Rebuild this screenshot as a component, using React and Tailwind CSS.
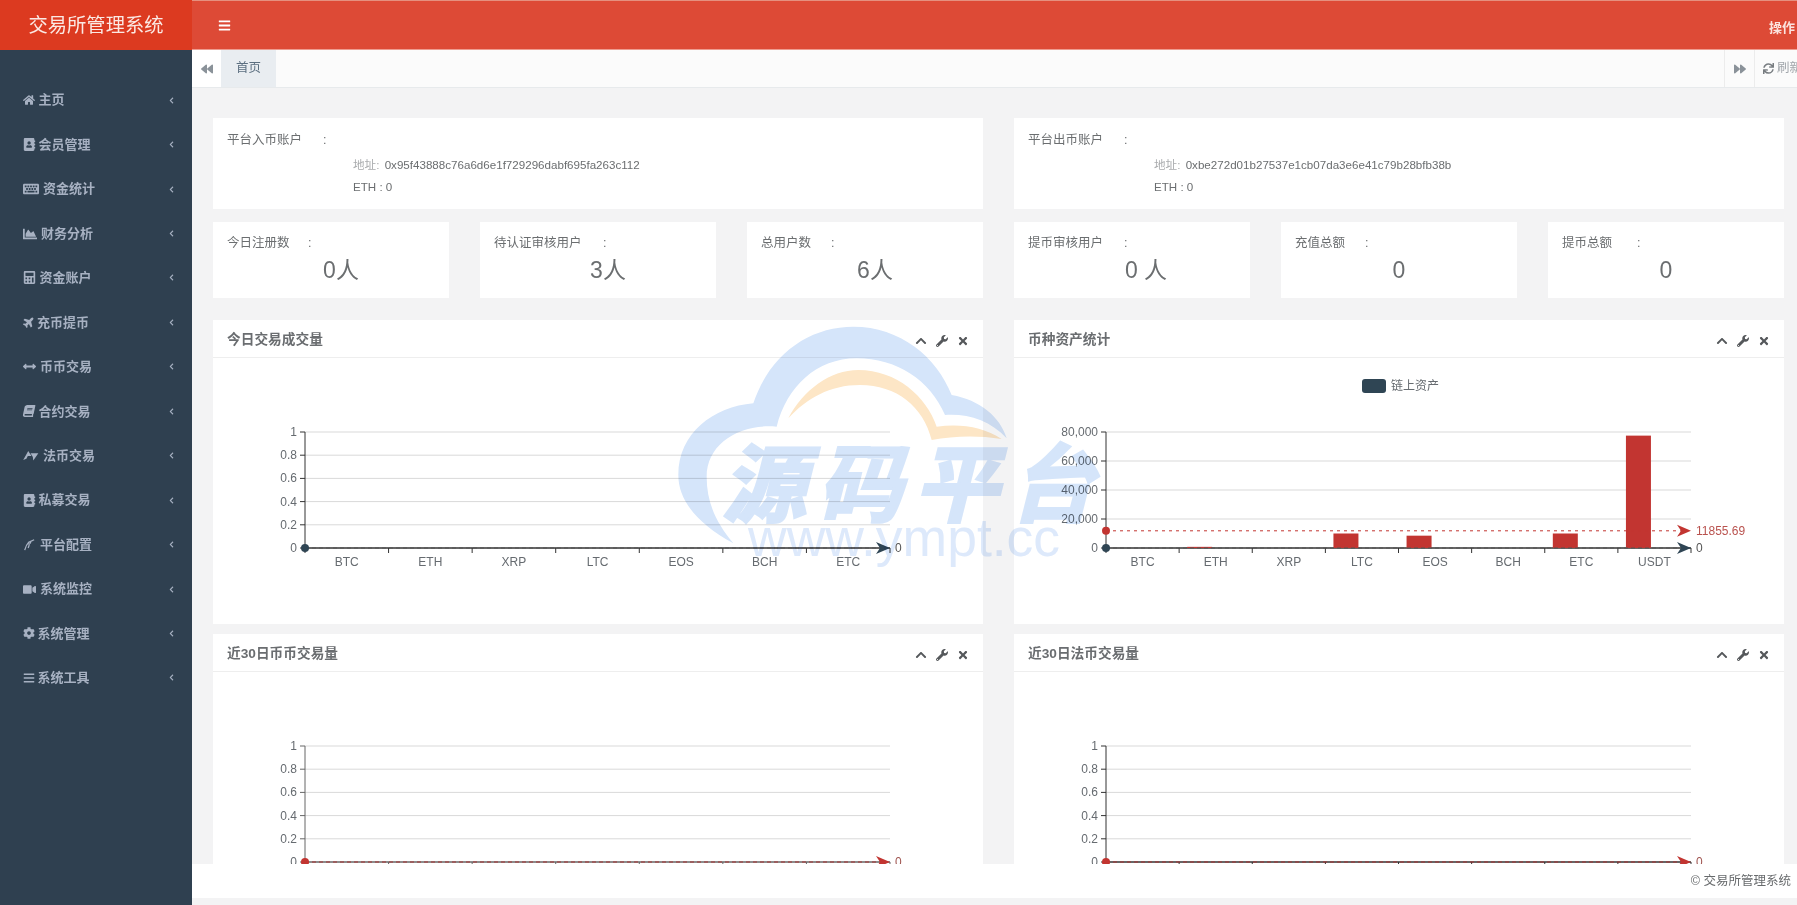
import React from "react";
import {
  FaHome, FaAddressBook, FaKeyboard, FaChartArea, FaCalculator, FaPlane, FaArrowsAltH, FaBook,
  FaVideo, FaCog, FaBars, FaChevronLeft, FaChevronUp, FaWrench, FaTimes,
  FaBackward, FaForward, FaSync,
} from "react-icons/fa";

// the two brand glyphs that the icon package doesn't have in this shape
const ModxIcon = ({ className }) => (
  <svg viewBox="0 0 17 12" fill="currentColor" className={className}>
    <path d="M0 11L5.5 1L9 6.5H5L3.5 9.5Z" />
    <path d="M8 3.5H16.5L11 11.5L10.5 7.5Z" />
  </svg>
);

const PiperIcon = ({ className }) => (
  <svg viewBox="0 0 14 14" fill="none" stroke="currentColor" strokeWidth="1.5" className={className}>
    <path d="M2 13.5C3 10 4 7 6.5 4.5L13 1.5" />
    <path d="M6.5 4.5C7.5 6 7.5 8 6 11" />
    <path d="M9 3.5L8.5 6" />
  </svg>
);

const navItems = [
  { label: "主页", icon: FaHome, w: "w-[15.5px]", size: "text-[12px]" },
  { label: "会员管理", icon: FaAddressBook, w: "w-[15.5px]", size: "text-[13px]" },
  { label: "资金统计", icon: FaKeyboard, w: "w-[20px]", size: "text-[16px]" },
  { label: "财务分析", icon: FaChartArea, w: "w-[18px]", size: "text-[14px]" },
  { label: "资金账户", icon: FaCalculator, w: "w-[16.5px]", size: "text-[13px]" },
  { label: "充币提币", icon: FaPlane, w: "w-[14px]", size: "text-[12px] -rotate-45" },
  { label: "币币交易", icon: FaArrowsAltH, w: "w-[17px]", size: "text-[13px]" },
  { label: "合约交易", icon: FaBook, w: "w-[15.5px]", size: "text-[12px] -skew-x-12" },
  { label: "法币交易", icon: ModxIcon, w: "w-[20px]", size: "w-[16px] h-[11px]" },
  { label: "私募交易", icon: FaAddressBook, w: "w-[15.5px]", size: "text-[13px]" },
  { label: "平台配置", icon: PiperIcon, w: "w-[17px]", size: "w-[12px] h-[13px]" },
  { label: "系统监控", icon: FaVideo, w: "w-[17px]", size: "text-[13px]" },
  { label: "系统管理", icon: FaCog, w: "w-[14.5px]", size: "text-[12px]" },
  { label: "系统工具", icon: FaBars, w: "w-[14.5px]", size: "text-[12px]" },
];

const coins = ["BTC", "ETH", "XRP", "LTC", "EOS", "BCH", "ETC"];
const unitTicks = ["1", "0.8", "0.6", "0.4", "0.2", "0"];

const Sidebar = () => (
  <aside className="w-[192px] shrink-0 bg-[#2f4050] flex flex-col">
    <div className="h-[50px] bg-[#dc3a20] text-[#fbe9e4] text-[19.3px] flex items-center justify-center pt-[3px]">
      交易所管理系统
    </div>
    <nav className="pt-[28px]">
      {navItems.map((item) => (
        <div key={item.label} className="h-[44.45px] pl-[23px] pr-[17px] flex items-center text-[13px] font-semibold text-[#a7b1c2]">
          <span className={`${item.w} shrink-0`}>
            <item.icon className={item.size} />
          </span>
          <span className="flex-1">{item.label}</span>
          <FaChevronLeft className="text-[7px]" />
        </div>
      ))}
    </nav>
  </aside>
);

const TopBar = () => (
  <header className="h-[50px] shrink-0 bg-[#dd4a36] border-t border-t-[#e5907f] border-b border-b-[#ee9c90] flex items-center justify-between pl-[26px] text-white">
    <FaBars className="text-[13px]" />
    <span className="text-[13px] font-bold w-[28px] pt-[6px] overflow-hidden whitespace-nowrap text-[#fbe3de]">操作</span>
  </header>
);

const TabBar = () => (
  <div className="h-[38px] shrink-0 bg-[#fbfbfb] border-b border-[#e7eaec] flex items-stretch text-[#8a9299]">
    <div className="w-[29px] bg-white flex items-center justify-center">
      <FaBackward className="text-[12px]" />
    </div>
    <div className="w-[55px] bg-[#e9edf1] text-[#5c6f80] text-[12.5px] flex items-center justify-center">首页</div>
    <div className="flex-1" />
    <div className="w-[30px] border-l border-[#ececec] flex items-center justify-center">
      <FaForward className="text-[12px]" />
    </div>
    <div className="w-[43px] border-l border-[#ececec] pl-[8px] flex items-center gap-[3px] overflow-hidden whitespace-nowrap text-[12.5px] text-[#a0a5aa]">
      <FaSync className="text-[11px] shrink-0 text-[#777c80]" />
      <span>刷新</span>
    </div>
  </div>
);

const AccountCard = ({ title, address }) => (
  <div className="h-[91px] bg-white pl-[14px] pt-[14px] text-[12.5px] text-[#6b6e70]">
    <div className="flex h-[16px] items-center">
      <span className="w-[96px]">{title}</span>
      <span>:</span>
    </div>
    <div className="pl-[126px] pt-[6px] text-[11.6px] leading-[21.5px]">
      <div>
        <span className="text-[#a9abad] mr-[2px]">地址:</span> {address}
      </div>
      <div>ETH : 0</div>
    </div>
  </div>
);

const StatCard = ({ title, colon, value, valueClass }) => (
  <div className="h-[76px] bg-white pl-[14px] pt-[13px] text-[#6b6e70]">
    <div className="flex h-[16px] items-center text-[12.5px]">
      <span className={colon}>{title}</span>
      <span>:</span>
    </div>
    <div className={`-ml-[14px] mt-[5px] text-center text-[23px] leading-[28px] ${valueClass}`}>{value}</div>
  </div>
);

const ChartSvg = ({ cats, ticks, scale, bars, axisColor, lineColor, markLine, endColor }) => {
  const x0 = 92;
  const x1 = 677;
  const top = 74;
  const base = 190;
  const step = (x1 - x0) / cats;
  const rowH = (base - top) / (ticks.length - 1);
  const yOf = (v) => base - (v / scale) * (base - top);
  return (
    <svg width="770" height="266" className="block" fontFamily="'Liberation Sans',sans-serif" fontSize="12">
      {ticks.map((t, i) => {
        const y = top + rowH * i;
        return (
          <g key={t}>
            {i < ticks.length - 1 && <line x1={x0} x2={x1} y1={y} y2={y} stroke="#d9d9d9" />}
            <line x1={x0 - 5} x2={x0} y1={y} y2={y} stroke={axisColor} />
            <text x={x0 - 8} y={y + 4} textAnchor="end" fill="#666b70">{t}</text>
          </g>
        );
      })}
      <line x1={x0} x2={x0} y1={top} y2={base} stroke={axisColor} />
      <line x1={x0} x2={x1} y1={base} y2={base} stroke={axisColor} strokeWidth="1.5" />
      {Array.from({ length: cats + 1 }).map((_, i) => (
        <line key={i} x1={x0 + step * i} x2={x0 + step * i} y1={base} y2={base + 5} stroke={axisColor} />
      ))}
      {bars && bars.map((v, i) => v > 0 && (
        <rect key={i} x={x0 + step * i + step / 2 - 28.5} y={yOf(v)} width="25" height={base - yOf(v)} fill="#c23531" />
      ))}
      <line x1={x0} x2={x1 - 10} y1={base} y2={base} stroke={lineColor} strokeWidth="1.2" strokeDasharray="4 3" />
      {markLine && (
        <g>
          <line x1={x0} x2={x1 - 10} y1={yOf(markLine)} y2={yOf(markLine)} stroke="#c23531" strokeDasharray="3 4" />
          <circle cx={x0} cy={yOf(markLine)} r="4" fill="#c23531" />
          <path d={`M${x1 - 14} ${yOf(markLine) - 6}L${x1} ${yOf(markLine)}L${x1 - 14} ${yOf(markLine) + 6}L${x1 - 10} ${yOf(markLine)}Z`} fill="#c23531" />
          <text x={x1 + 5} y={yOf(markLine) + 4} fill="#b9524e">11855.69</text>
        </g>
      )}
      <circle cx={x0} cy={base} r="4" fill={endColor} />
      <path d={`M${x1 - 14} ${base - 6}L${x1} ${base}L${x1 - 14} ${base + 6}L${x1 - 10} ${base}Z`} fill={endColor} />
      <text x={x1 + 5} y={base + 4} fill={endColor === "#2f4554" ? "#555" : "#a05550"}>0</text>
    </svg>
  );
};

const ChartCard = ({ title, children }) => (
  <div className="relative bg-white h-[304px]">
    <div className="h-[38px] border-b border-[#eeeeee] flex items-center justify-between pl-[14px] pr-[14px] pt-[4px] text-[#6a6d70]">
      <h5 className="text-[13.7px] font-semibold">{title}</h5>
      <div className="flex items-center gap-[9px] text-[#55585b] text-[12px]">
        <FaChevronUp />
        <FaWrench />
        <FaTimes />
      </div>
    </div>
    {children}
  </div>
);

const AxisLabels = ({ labels }) => (
  <div className="absolute left-[92px] w-[585px] top-[195px] flex text-[12px] text-[#666b70]">
    {labels.map((c) => (
      <span key={c} className="flex-1 text-center">{c}</span>
    ))}
  </div>
);

const Watermark = () => (
  <div className="pointer-events-none absolute left-[640px] top-[310px] w-[520px] h-[280px] mix-blend-multiply">
    <svg viewBox="0 0 1560 840" className="absolute inset-0 w-full h-full">
      <path
        d="M280 700C170 640 115 570 115 495C115 370 220 290 340 280C390 130 510 50 640 50C780 50 890 140 935 255C1020 270 1080 320 1100 385C1050 330 980 310 915 315C870 210 770 145 650 145C530 145 440 230 410 350C300 340 200 400 200 500C200 580 230 640 280 700Z"
        fill="#d5e5fa"
      />
      <path
        d="M445 325C490 240 570 180 655 180C770 180 860 260 890 350C960 340 1030 350 1085 387C1010 375 940 378 875 390C850 290 770 225 660 225C570 225 500 265 445 325Z"
        fill="#fde6c6"
      />
    </svg>
    <div className="absolute left-[82px] top-[119px] text-[#d5e5fa] text-[84px] leading-[100px] font-bold italic tracking-[12px] whitespace-nowrap [-webkit-text-stroke:3px_#d5e5fa] font-['Noto_Sans_CJK_SC',sans-serif]">
      源码平台
    </div>
    <div className="absolute left-[108px] top-[198px] text-[#dde9fb] text-[53.5px] leading-[60px] whitespace-nowrap font-['Liberation_Sans',sans-serif]">
      www.ympt.cc
    </div>
  </div>
);

export default function App() {
  return (
    <div className="relative flex h-screen w-screen overflow-hidden bg-[#f3f3f4] font-['Liberation_Sans','Noto_Sans_CJK_SC',sans-serif]">
      <Sidebar />
      <div className="flex-1 min-w-0 flex flex-col">
        <TopBar />
        <TabBar />
        <main className="flex-1 min-h-0 overflow-hidden pl-[21px] pr-[13px] pt-[30px]">
          <div className="grid grid-cols-2 gap-x-[31px]">
            <AccountCard title="平台入币账户" address="0x95f43888c76a6d6e1f729296dabf695fa263c112" />
            <AccountCard title="平台出币账户" address="0xbe272d01b27537e1cb07da3e6e41c79b28bfb38b" />
            <div className="mt-[13px] grid grid-cols-3 gap-x-[31px]">
              <StatCard title="今日注册数" colon="w-[81px]" value="0人" valueClass="pl-[20px]" />
              <StatCard title="待认证审核用户" colon="w-[109px]" value="3人" valueClass="pl-[20px]" />
              <StatCard title="总用户数" colon="w-[70px]" value="6人" valueClass="pl-[20px]" />
            </div>
            <div className="mt-[13px] grid grid-cols-3 gap-x-[31px]">
              <StatCard title="提币审核用户" colon="w-[96px]" value="0 人" valueClass="pl-[28px]" />
              <StatCard title="充值总额" colon="w-[70px]" value="0" valueClass="" />
              <StatCard title="提币总额" colon="w-[75px]" value="0" valueClass="" />
            </div>
            <div className="mt-[22px]">
              <ChartCard title="今日交易成交量">
                <div className="relative">
                  <ChartSvg cats={7} ticks={unitTicks} scale={1} axisColor="#333" lineColor="#555" endColor="#2f4554" />
                  <AxisLabels labels={coins} />
                </div>
              </ChartCard>
            </div>
            <div className="mt-[22px]">
              <ChartCard title="币种资产统计">
                <div className="absolute left-[348px] top-[57px] flex items-center gap-[5px] text-[12px] text-[#666b70]">
                  <span className="w-[24px] h-[14px] rounded-[3px] bg-[#2f4554]" />
                  <span>链上资产</span>
                </div>
                <div className="relative">
                  <ChartSvg
                    cats={8}
                    ticks={["80,000", "60,000", "40,000", "20,000", "0"]}
                    scale={80000}
                    bars={[0, 800, 0, 10000, 8500, 0, 10000, 77500]}
                    markLine={11855.69}
                    axisColor="#333"
                    lineColor="#555"
                    endColor="#2f4554"
                  />
                  <AxisLabels labels={[...coins, "USDT"]} />
                </div>
              </ChartCard>
            </div>
            <div className="mt-[10px]">
              <ChartCard title="近30日币币交易量">
                <ChartSvg cats={7} ticks={unitTicks} scale={1} axisColor="#666" lineColor="#a33" endColor="#c23531" />
              </ChartCard>
            </div>
            <div className="mt-[10px]">
              <ChartCard title="近30日法币交易量">
                <ChartSvg cats={8} ticks={unitTicks} scale={1} axisColor="#333" lineColor="#a33" endColor="#c23531" />
              </ChartCard>
            </div>
          </div>
        </main>
        <footer className="h-[34px] shrink-0 bg-white pr-[6px] flex items-center justify-end text-[12.5px] text-[#676a6c]">
          © 交易所管理系统
        </footer>
        <div className="h-[7px] shrink-0 bg-[#f3f3f4]" />
      </div>
      <Watermark />
    </div>
  );
}
